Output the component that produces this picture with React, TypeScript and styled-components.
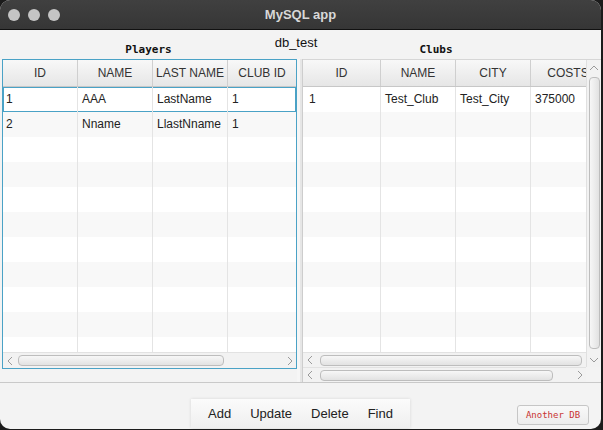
import React from "react";
import styled, { createGlobalStyle, css } from "styled-components";

const Global = createGlobalStyle`
  html, body { margin: 0; padding: 0; background: #1b1b1b; }
  body { font-family: "Liberation Sans", Arial, sans-serif; }
  * { box-sizing: border-box; }
`;

const Window = styled.div`
  width: 601px;
  height: 429px;
  border-radius: 10px;
  overflow: hidden;
  display: flex;
  flex-direction: column;
  background: #f3f3f3;
`;

const TitleBar = styled.div`
  height: 30px;
  flex: none;
  display: grid;
  grid-template-columns: 1fr auto 1fr;
  align-items: center;
  background: linear-gradient(#404040, #363636);
  border-bottom: 1px solid #111;
`;

const Lights = styled.div`
  display: flex;
  gap: 8px;
  padding-left: 8px;
`;

const Light = styled.span`
  width: 12px;
  height: 12px;
  border-radius: 50%;
  background: #c4c4c4;
`;

const Title = styled.div`
  font: bold 13px "Liberation Sans", Arial, sans-serif;
  color: #d8d8d8;
`;

const Labels = styled.div`
  height: 29px;
  flex: none;
  display: grid;
  grid-template-columns: 297px 6px 1fr;
  grid-template-rows: 29px;
`;

const DbName = styled.div`
  grid-column: 1 / -1;
  grid-row: 1;
  justify-self: center;
  align-self: start;
  padding: 5px 9px 0 0;
  font: 13px/15px "Liberation Sans", Arial, sans-serif;
  color: #111;
`;

const PaneLabel = styled.div<{ $col: number; $shift: number }>`
  grid-column: ${(p) => p.$col};
  grid-row: 1;
  justify-self: center;
  align-self: end;
  margin-bottom: 3px;
  padding-right: ${(p) => p.$shift}px;
  font: bold 11px/13px "DejaVu Sans Mono", "Liberation Mono", monospace;
  color: #111;
`;

const Split = styled.div`
  height: 324px;
  flex: none;
  display: flex;
  border-bottom: 1px solid #c9c9c9;
`;

const LeftPane = styled.div`
  width: 297px;
  flex: none;
  padding: 0 0 13px 2px;
`;

const Frame = styled.div`
  height: 310px;
  border: 1px solid #4aa2c6;
  display: flex;
  flex-direction: column;
  background: #fff;
  overflow: hidden;
`;

const Divider = styled.div`
  width: 6px;
  flex: none;
  background: linear-gradient(90deg, #f6f6f6, #f6f6f6 3px, #e6e6e6 3px);
  border-right: 1px solid #cdcdcd;
`;

const RightPane = styled.div`
  flex: 1;
  min-width: 0;
  display: flex;
  flex-direction: column;
  border-top: 1px solid #d6d6d6;
`;

const RightTop = styled.div`
  display: flex;
  height: 307px;
  flex: none;
`;

const TableBox = styled.div`
  flex: 1;
  min-width: 0;
  display: flex;
  flex-direction: column;
  background: #fff;
  overflow: hidden;
`;

const HeaderRow = styled.div`
  height: 27px;
  flex: none;
  display: flex;
  background: linear-gradient(#f8f8f8, #e6e6e6);
  border-bottom: 1px solid #c7c7c7;
`;

const HeaderCell = styled.div<{ $w: number }>`
  width: ${(p) => p.$w}px;
  flex: none;
  border-right: 1px solid #cfcfcf;
  text-align: center;
  font-size: 12px;
  line-height: 26px;
  color: #333;
  white-space: nowrap;
  overflow: hidden;
`;

const Body = styled.div`
  height: 265px;
  flex: none;
  overflow: hidden;
`;

const Row = styled.div<{ $alt: boolean; $focused?: boolean }>`
  height: 25px;
  display: flex;
  background: ${(p) => (p.$alt ? "#f8f8f8" : "#ffffff")};
  ${(p) =>
    p.$focused &&
    css`
      box-shadow: inset 0 0 0 1px #4aa2c6;
    `}
`;

const Cell = styled.div<{ $w: number; $pad: number }>`
  width: ${(p) => p.$w}px;
  flex: none;
  border-right: 1px solid #e4e4e4;
  padding-left: ${(p) => p.$pad}px;
  font-size: 12px;
  line-height: 25px;
  color: #222;
  white-space: nowrap;
  overflow: hidden;
`;

const HBar = styled.div<{ $h: number }>`
  height: ${(p) => p.$h}px;
  flex: none;
  display: flex;
  align-items: center;
  background: #f2f2f2;
  border-top: 1px solid #e2e2e2;
`;

const ArrowBox = styled.div`
  width: 13px;
  flex: none;
  display: flex;
  align-items: center;
  justify-content: center;
`;

const Track = styled.div`
  flex: 1;
  min-width: 0;
  height: 100%;
  display: flex;
  align-items: center;
`;

const Thumb = styled.div<{ $offset: number; $size: number }>`
  margin-left: ${(p) => p.$offset}px;
  width: ${(p) => p.$size}px;
  height: 11px;
  flex: none;
  border: 1px solid #bdbdbd;
  border-radius: 4px;
  background: linear-gradient(#f7f7f7, #e2e2e2);
`;

const VBar = styled.div`
  width: 15px;
  flex: none;
  display: flex;
  flex-direction: column;
  align-items: center;
  background: #f2f2f2;
  border-left: 1px solid #e0e0e0;
`;

const VArrow = styled.div`
  height: 15px;
  flex: none;
  display: flex;
  align-items: center;
  justify-content: center;
`;

const VThumb = styled.div`
  flex: 1;
  width: 11px;
  margin: 2px 0 3px;
  border: 1px solid #bdbdbd;
  border-radius: 4px;
  background: linear-gradient(90deg, #f7f7f7, #e2e2e2);
`;

const OuterBar = styled.div`
  display: flex;
  height: 15px;
  flex: none;
`;

const Corner = styled.div`
  width: 15px;
  flex: none;
  background: #f3f3f3;
`;

const Footer = styled.div`
  flex: 1;
  display: grid;
  grid-template-columns: 1fr auto 1fr;
`;

const ToolBar = styled.div`
  grid-column: 2;
  align-self: end;
  height: 29px;
  margin-bottom: 1px;
  padding: 0 8px;
  display: flex;
  align-items: center;
  background: linear-gradient(#fbfbfb, #efefef);
  box-shadow: 0 0 3px rgba(0, 0, 0, 0.12);
`;

const ToolButton = styled.button`
  border: none;
  background: transparent;
  padding: 0 9.5px;
  font: 13px "Liberation Sans", Arial, sans-serif;
  color: #222;
`;

const AltButton = styled.button`
  grid-column: 3;
  justify-self: end;
  align-self: end;
  width: 72px;
  height: 20px;
  margin: 0 12px 4px 0;
  padding: 0;
  border: 1px solid #c6c6c6;
  border-radius: 3px;
  background: linear-gradient(#f9f9f9, #ececec);
  font: 9px "DejaVu Sans Mono", "Liberation Mono", monospace;
  color: #c83232;
`;

type Dir = "left" | "right" | "up" | "down";

const Chevron = ({ dir }: { dir: Dir }) => {
  const pts: Record<Dir, string> = {
    left: "5,1 1,5 5,9",
    right: "1,1 5,5 1,9",
    up: "1,5 5,1 9,5",
    down: "1,1 5,5 9,1",
  };
  const horiz = dir === "left" || dir === "right";
  return (
    <svg width={horiz ? 6 : 10} height={horiz ? 10 : 6} viewBox={horiz ? "0 0 6 10" : "0 0 10 6"}>
      <polyline points={pts[dir]} fill="none" stroke="#9a9a9a" strokeWidth="1" />
    </svg>
  );
};

const HScroll = ({ h, offset, size, right = true }: { h: number; offset: number; size: number; right?: boolean }) => (
  <HBar $h={h}>
    <ArrowBox>
      <Chevron dir="left" />
    </ArrowBox>
    <Track>
      <Thumb $offset={offset} $size={size} />
    </Track>
    {right && (
      <ArrowBox>
        <Chevron dir="right" />
      </ArrowBox>
    )}
  </HBar>
);

const leftCols = [
  { name: "ID", w: 75 },
  { name: "NAME", w: 75 },
  { name: "LAST NAME", w: 75 },
  { name: "CLUB ID", w: 69 },
];
const players = [
  ["1", "AAA", "LastName", "1"],
  ["2", "Nname", "LlastNname", "1"],
];

const rightCols = [
  { name: "ID", w: 78 },
  { name: "NAME", w: 75 },
  { name: "CITY", w: 75 },
  { name: "COSTS", w: 75 },
];
const clubs = [["1", "Test_Club", "Test_City", "375000"]];

const TableRows = ({
  cols,
  data,
  focusFirst,
  firstPad,
}: {
  cols: { w: number }[];
  data: string[][];
  focusFirst?: boolean;
  firstPad: number;
}) => (
  <Body>
    {Array.from({ length: 11 }).map((_, i) => (
      <Row key={i} $alt={i % 2 === 1} $focused={focusFirst && i === 0}>
        {cols.map((c, j) => (
          <Cell key={j} $w={c.w} $pad={j === 0 ? firstPad : 4}>
            {data[i] ? data[i][j] : ""}
          </Cell>
        ))}
      </Row>
    ))}
  </Body>
);

export default function App() {
  return (
    <>
      <Global />
      <Window>
        <TitleBar>
          <Lights>
            <Light />
            <Light />
            <Light />
          </Lights>
          <Title>MySQL app</Title>
          <div />
        </TitleBar>
        <Labels>
          <DbName>db_test</DbName>
          <PaneLabel $col={1} $shift={0}>Players</PaneLabel>
          <PaneLabel $col={3} $shift={32}>Clubs</PaneLabel>
        </Labels>
        <Split>
          <LeftPane>
            <Frame>
              <HeaderRow>
                {leftCols.map((c) => (
                  <HeaderCell key={c.name} $w={c.w}>
                    {c.name}
                  </HeaderCell>
                ))}
              </HeaderRow>
              <TableRows cols={leftCols} data={players} focusFirst firstPad={3} />
              <HScroll h={16} offset={2} size={206} />
            </Frame>
          </LeftPane>
          <Divider />
          <RightPane>
            <RightTop>
              <TableBox>
                <HeaderRow>
                  {rightCols.map((c) => (
                    <HeaderCell key={c.name} $w={c.w}>
                      {c.name}
                    </HeaderCell>
                  ))}
                </HeaderRow>
                <TableRows cols={rightCols} data={clubs} firstPad={6} />
                <HScroll h={15} offset={4} size={262} right={false} />
              </TableBox>
              <VBar>
                <VArrow>
                  <Chevron dir="up" />
                </VArrow>
                <VThumb />
                <VArrow>
                  <Chevron dir="down" />
                </VArrow>
              </VBar>
            </RightTop>
            <OuterBar>
              <TableBox>
                <HScroll h={15} offset={4} size={233} />
              </TableBox>
              <Corner />
            </OuterBar>
          </RightPane>
        </Split>
        <Footer>
          <ToolBar>
            <ToolButton>Add</ToolButton>
            <ToolButton>Update</ToolButton>
            <ToolButton>Delete</ToolButton>
            <ToolButton>Find</ToolButton>
          </ToolBar>
          <AltButton>Another DB</AltButton>
        </Footer>
      </Window>
    </>
  );
}
